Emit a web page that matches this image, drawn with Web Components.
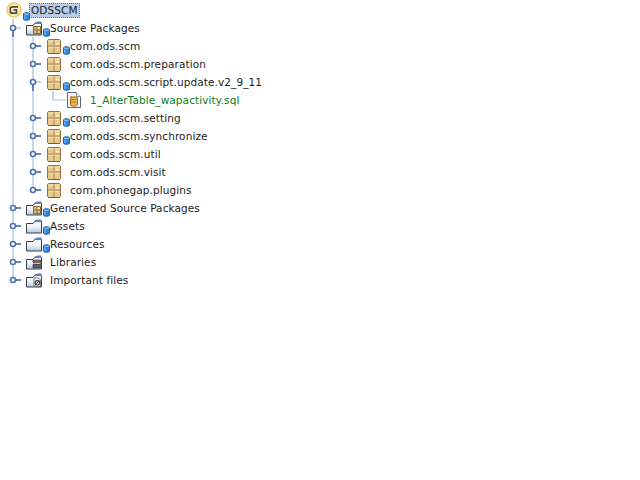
<!DOCTYPE html>
<html>
<head>
<meta charset="utf-8">
<style>
html, body { margin: 0; background: #fff; }
body { padding-top: 1px; font: 10.5px "DejaVu Sans", sans-serif; color: #1c1c1c; }
</style>
</head>
<body>
<project-tree>
    <tree-node icon="project" badge label="ODSSCM" selected root>
        <tree-node icon="root" badge label="Source Packages" open>
            <tree-node icon="pkg" badge label="com.ods.scm"></tree-node>
            <tree-node icon="pkg" label="com.ods.scm.preparation"></tree-node>
            <tree-node icon="pkg" badge label="com.ods.scm.script.update.v2_9_11" open>
                <tree-node icon="sql" label="1_AlterTable_wapactivity.sql" leaf></tree-node>
            </tree-node>
            <tree-node icon="pkg" badge label="com.ods.scm.setting"></tree-node>
            <tree-node icon="pkg" badge label="com.ods.scm.synchronize"></tree-node>
            <tree-node icon="pkg" label="com.ods.scm.util"></tree-node>
            <tree-node icon="pkg" label="com.ods.scm.visit"></tree-node>
            <tree-node icon="pkg" label="com.phonegap.plugins"></tree-node>
        </tree-node>
        <tree-node icon="root" badge label="Generated Source Packages"></tree-node>
        <tree-node icon="folder" badge label="Assets"></tree-node>
        <tree-node icon="folder" badge label="Resources"></tree-node>
        <tree-node icon="libs" label="Libraries"></tree-node>
        <tree-node icon="important" label="Important files"></tree-node>
    </tree-node>
</project-tree>

<script>
const folderBase = `
    <defs><linearGradient id="fade" x1="0" y1="0" x2="0" y2="1"><stop offset="0" stop-color="#fbfcfd"/><stop offset=".5" stop-color="#eef2f7"/><stop offset="1" stop-color="#adc5e0"/></linearGradient></defs>
    <path d="M.5 5.500h6.500l1.500-2h7v11.500H.500z" fill="url(#fade)" stroke="#3d4248"/>
    <path d="M8.500 2.500l3-1h4v2.500h-7z" fill="#5b82bd"/>`;
const ICONS = {
    project: `<svg width="16" height="16" viewBox="0 0 16 16">
        <circle cx="8" cy="8" r="7.800" fill="#f1cf6f"/>
        <circle cx="8" cy="8" r="6" fill="#fbefc0"/>
        <path d="M12 4.800H6.300Q4.300 4.800 4.300 6.800v2.400q0 2 2 2H10.500V7.800H7.500" fill="none" stroke="#4f4839" stroke-width="1.700"/>
    </svg>`,
    root: `<svg width="16" height="16" viewBox="0 0 16 16">${folderBase}
        <path d="M7.500 6.500h7v7h-7z" fill="#e2bf78" stroke="#8f6c34"/>
        <path d="M11 6.500v7M7.500 10h7" stroke="#8f6c34"/>
        <path d="M11.500 7.500h2.500v1.500h-2.500z" fill="#f8edcd"/>
    </svg>`,
    folder: `<svg width="16" height="16" viewBox="0 0 16 16">${folderBase}</svg>`,
    libs: `<svg width="16" height="16" viewBox="0 0 16 16">${folderBase}
        <path d="M7 6h7.500v2.500H7z" fill="#a3525a" stroke="#4f3338" stroke-width=".7"/>
        <path d="M8 8.500h6.500v2H8z" fill="#dcca9c" stroke="#5d5140" stroke-width=".7"/>
        <path d="M7 10.500h7.500V14H7z" fill="#56606d" stroke="#33383f" stroke-width=".7"/>
    </svg>`,
    important: `<svg width="16" height="16" viewBox="0 0 16 16">${folderBase}
        <path d="M8 6h4.500l2 2v6.500H8z" fill="#f6f6f6" stroke="#5c6066" stroke-width=".8"/>
        <circle cx="11.300" cy="10.800" r="2.200" fill="none" stroke="#3f4349" stroke-width="1.200"/>
        <path d="M9.300 13.300l4-5" stroke="#3f4349"/>
    </svg>`,
    pkg: `<svg width="16" height="16" viewBox="0 0 16 16">
        <path d="M1.500 2.500 2.500 1.500h11l1 1v12l-1 1h-11l-1-1z" fill="#e6ca8e" stroke="#94733c"/>
        <path d="M2 8h12M8 2v5M8 9v6" stroke="#a98650"/>
        <path d="M2.500 2.500h5v1h-5zM8.500 2.500h5v1h-5z" fill="#f6e6c3"/>
        <path d="M9.500 5h3.500v1.500H9.500z" fill="#fbf3dd"/>
        <path d="M2.500 9h5v1h-5zM8.500 9h5v1h-5z" fill="#f4e0b5"/>
        <path d="M2 15.500h12" stroke="#7c5f2e"/>
    </svg>`,
    sql: `<svg width="14" height="16" viewBox="0 0 14 16">
        <path d="M.5.500h9l4 4v11H.500z" fill="#f2f4f7" stroke="#5d6670"/>
        <path d="M9.500.500v4h4" fill="#fff" stroke="#8d959e"/>
        <path d="M3.500 5h6q1 0 1 1v6q0 2-2 2h-3q-2 0-2-2V6q0-1 1-1z" fill="#eeb64e" stroke="#a66f1e"/>
        <path d="M3.500 7.500h6M3.500 10h6" stroke="#a66f1e" stroke-width=".8"/>
    </svg>`
};
const BADGE = `<svg width="7" height="9" viewBox="0 0 7 9">
    <path d="M.5 1.800C.5.400 6.500.400 6.500 1.800v5.400c0 1.400-6 1.400-6 0z" fill="#2f86dc" stroke="#1b5fae"/>
    <path d="M1 1.800c1 .8 4 .8 5 0" fill="none" stroke="#a7d3f7"/>
    <path d="M2 3.500v3.500" stroke="#8cc3f2"/>
</svg>`;
const handle = (open) => `<svg width="20" height="18" viewBox="0 0 20 18">
    ${open ? '<path d="M10 11v7" stroke="#5f84bb" stroke-width="2"/><path d="M13 9h5" stroke="#c3d6ea" stroke-width="2"/>'
           : '<path d="M12 9h6" stroke="#5f84bb" stroke-width="2"/>'}
    <circle cx="10" cy="9" r="2.500" fill="#fff" stroke="#4a72b0" stroke-width="1.600"/>
</svg>`;
const ELBOW = `<svg width="23" height="18" viewBox="0 0 23 18"><path d="M10 0v9h13" fill="none" stroke="#c3d6ea" stroke-width="1.500"/></svg>`;

class ProjectTree extends HTMLElement {
    constructor() {
        super();
        this.attachShadow({ mode: 'open' });
    }
    connectedCallback() {
        this.shadowRoot.innerHTML = `
        <style>
            :host { display: block; }
        </style>
        <slot></slot>
        `;
    }
}

class TreeNode extends HTMLElement {
    constructor() {
        super();
        this.attachShadow({ mode: 'open' });
    }
    connectedCallback() {
        const root = this.hasAttribute('root');
        const leaf = this.hasAttribute('leaf');
        const open = this.hasAttribute('open');
        const icon = ICONS[this.getAttribute('icon')];
        const badge = this.hasAttribute('badge') ? `<span class="badge">${BADGE}</span>` : '';
        this.shadowRoot.innerHTML = `
        <style>
            :host { display: block; }
            .row { display: flex; align-items: center; height: 18px; white-space: nowrap; }
            .handle { flex: 0 0 20px; width: 20px; height: 18px; margin-right: 3px; }
            .handle svg, .icon svg, .badge svg { display: block; }
            .icon { position: relative; flex: 0 0 auto; display: flex; }
            .badge { position: absolute; left: calc(100% + 1px); top: 8px; }
            .slot-wrap { margin-left: 20px; background: linear-gradient(#c9d9ec, #c9d9ec) 9px 0 / 2px calc(100% - 9px) no-repeat; }
            .label { margin-left: 8px; letter-spacing: .1px; }
            :host([root]) .row { padding-left: 6px; }
            :host([root]) .slot-wrap { margin-left: 3px; }
            :host([root]) .badge { top: 10px; }
            :host([root]) .label { margin-left: 7px; padding: 0 2px; background: #b9cde6; outline: 1px dotted #5e7aa0; outline-offset: -1px; line-height: 15px; }
            :host([leaf]) .label { margin-left: 9px; color: #0b7d17; }
            :host([leaf]) .handle { flex-basis: 24px; width: 24px; margin-right: 0; }
        </style>
        <div class="row">
            ${root ? '' : `<span class="handle">${leaf ? ELBOW : handle(open)}</span>`}
            <span class="icon">${icon}${badge}</span>
            <span class="label">${this.getAttribute('label')}</span>
        </div>
        <div class="slot-wrap" ${root || open ? '' : 'hidden'}><slot></slot></div>
        `;
    }
}

customElements.define('project-tree', ProjectTree);
customElements.define('tree-node', TreeNode);
</script>
</body>
</html>
